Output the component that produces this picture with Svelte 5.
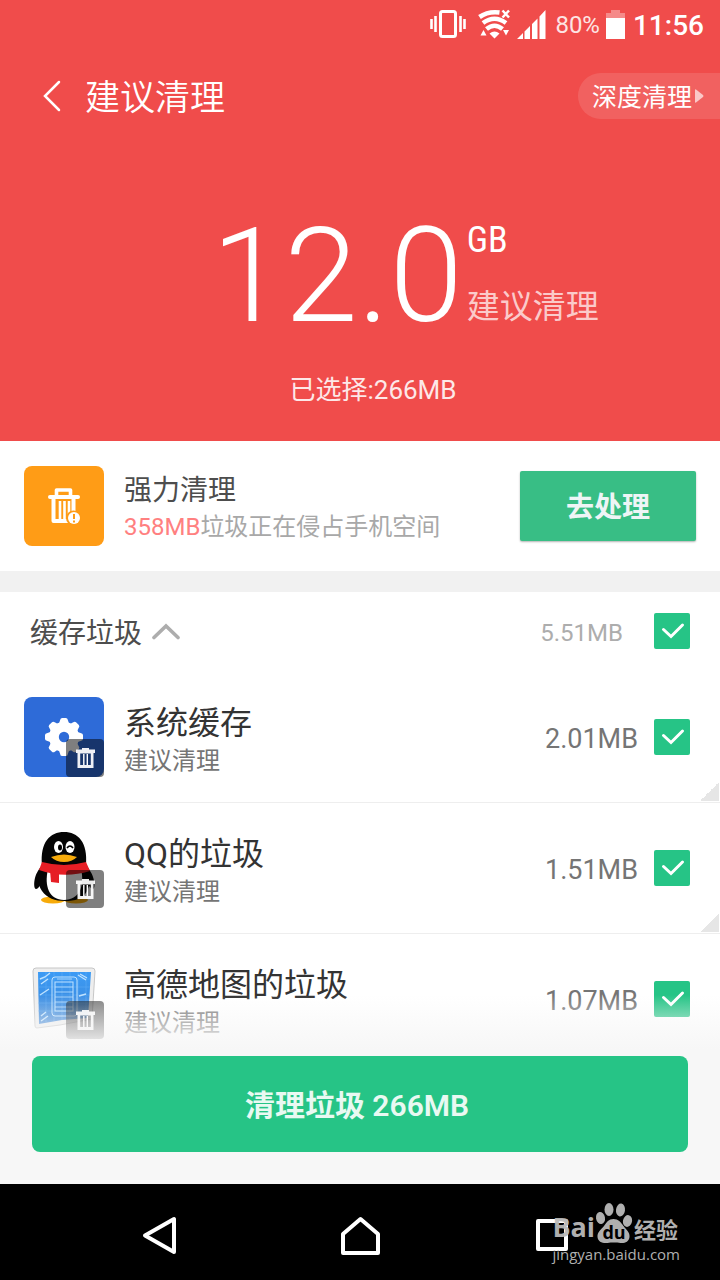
<script>
  let groupChecked = $state(true);
  let items = $state([
    { id: 'system', name: '系统缓存', size: '2.01MB', checked: true, corner: true },
    { id: 'qq', name: 'QQ的垃圾', size: '1.51MB', checked: true, corner: true },
    { id: 'map', name: '高德地图的垃圾', size: '1.07MB', checked: true, corner: false }
  ]);
</script>

{#snippet tick()}
  <svg class="tick" viewBox="0 0 36 36" aria-hidden="true"><path d="M9.500 16.500l7.500 7 11.500-11.500" /></svg>
{/snippet}

{#snippet badge()}
  <svg class="badge" viewBox="0 0 38 38" aria-hidden="true">
    <rect width="38" height="38" rx="4" fill="#000" fill-opacity=".5" />
    <path fill-rule="evenodd" d="M16 9h7v1.500h6V14h-1.500v15h-16V14H10v-3.500h6zM14.200 14.500V26h10.600V14.500z" fill="#fff" fill-opacity=".93" />
    <path d="M17.800 15v11M21.300 15v11" stroke="#fff" stroke-width="1.400" />
  </svg>
{/snippet}

<div class="page">
  <div class="hero">
    <div class="status">
      <svg width="36" height="28" viewBox="0 0 36 28" aria-hidden="true">
        <rect x="10.500" y="1.500" width="15" height="25" rx="2" fill="none" stroke="#fff" stroke-width="3" />
        <path d="M1.500 9v10M5.500 6v16M30.500 6v16M34.500 9v10" stroke="#fff" stroke-width="2.600" />
      </svg>
      <svg class="wifi" width="34" height="30" viewBox="0 0 34 30" aria-hidden="true">
        <g fill="none" stroke="#fff" stroke-width="4.600">
          <path d="M1.500 8Q10 2 21.500 3.500" />
          <path d="M5 14Q16.500 5.500 28 14" />
          <path d="M8.500 20Q16.500 13.500 24.500 20" />
        </g>
        <path d="M11.500 24.500q5-4 10 0l-5 5zM2.500 26.500l3-5.500 3 5.500zM25 21h6l-3 5.500z" fill="#fff" />
        <path d="M24.500 1.500l6.500 7M31 1.500l-6.500 7" stroke="#fff" stroke-width="2.500" />
      </svg>
      <svg width="29" height="29" viewBox="0 0 29 29" aria-hidden="true">
        <path d="M0 29l6-6v6zM7.500 21.500l5.500-5.500V29H7.500zM15 14l5.500-5.500V29H15zM22.500 6.500L28.500 0v29h-6z" fill="#fff" />
      </svg>
      <span class="percent">80%</span>
      <svg width="19" height="29" viewBox="0 0 19 29" aria-hidden="true">
        <path d="M5 0h9v3h5v5H0V3h5z" fill="#fff" fill-opacity=".35" />
        <path d="M0 8h19v21H0z" fill="#fff" />
      </svg>
      <time>11:56</time>
    </div>

    <header>
      <button class="back" aria-label="返回">
        <svg width="18" height="32" viewBox="0 0 18 32" aria-hidden="true"><path d="M16 2L2 16l14 14" fill="none" stroke="#fff" stroke-width="2.500" stroke-linecap="round" /></svg>
      </button>
      <h1>建议清理</h1>
      <button class="deep"><span>深度清理</span><svg width="9" height="14" viewBox="0 0 9 14" aria-hidden="true"><path d="M0 1q0-1 1-.5l7 5.500q1 1 0 2l-7 5.500q-1 .5-1-.5z" fill="#fff" fill-opacity=".65" /></svg></button>
    </header>

    <div class="total">
      <strong>12.0</strong>
      <div class="unit"><span class="gb">GB</span><span class="advice">建议清理</span></div>
    </div>
    <p class="selected">已选择:266MB</p>
  </div>

  <section class="power">
    <svg width="80" height="80" viewBox="0 0 80 80" aria-hidden="true">
      <rect width="80" height="80" rx="8" fill="#ff9c16" />
      <path d="M32.500 31v-7h14v7" fill="none" stroke="#fff" stroke-width="3.600" stroke-linejoin="round" />
      <path d="M26 31h28" stroke="#fff" stroke-width="4" stroke-linecap="round" />
      <path d="M29.500 32v23H46M49.500 32v13" fill="none" stroke="#fff" stroke-width="4" stroke-linejoin="round" />
      <path d="M36 35v19M40.500 35v19M45 35v14" stroke="#fff" stroke-width="2.600" />
      <circle cx="49.500" cy="52" r="7.500" fill="#ff9c16" />
      <circle cx="50" cy="52" r="6" fill="#fff" />
      <path d="M50 48v5M50 54.500v2" stroke="#ff9c16" stroke-width="2" />
    </svg>
    <div class="text">
      <h2>强力清理</h2>
      <p><em>358MB</em>垃圾正在侵占手机空间</p>
    </div>
    <button class="handle">去处理</button>
  </section>

  <section class="list">
    <div class="group">
      <button class="toggle" aria-expanded="true">
        <span>缓存垃圾</span>
        <svg width="28" height="17" viewBox="0 0 28 17" aria-hidden="true"><path d="M2 14.500L14 3l12 11.500" fill="none" stroke="#adadad" stroke-width="3.600" stroke-linecap="round" /></svg>
      </button>
      <span class="sum">5.51MB</span>
      <label class="check"><input type="checkbox" aria-label="缓存垃圾" bind:checked={groupChecked} />{@render tick()}</label>
    </div>

    <ul>
      {#each items as item (item.id)}
        <li>
          <div class="icon">
            {#if item.id === 'system'}
              <svg viewBox="0 0 80 80" aria-hidden="true">
                <rect width="80" height="80" rx="8" fill="#2e6bd8" />
                <g fill="#fff">
                  <circle cx="40" cy="40" r="15" />
                  {#each [0, 45, 90, 135, 180, 225, 270, 315] as angle}
                    <path d="M33 28q2.500-1 3-4.500.3-2.500 2-2.500h4q1.700 0 2 2.500.5 3.500 3 4.500z" transform={`rotate(${angle} 40 40)`} />
                  {/each}
                </g>
                <circle cx="40" cy="40" r="5.200" fill="#2e6bd8" />
              </svg>
            {:else if item.id === 'qq'}
              <svg viewBox="0 0 80 80" aria-hidden="true">
                <ellipse cx="29" cy="72" rx="12" ry="3.500" fill="#f7ab0a" />
                <ellipse cx="52" cy="72" rx="12" ry="3.500" fill="#f7ab0a" />
                <g transform="translate(0 -1)">
                  <path d="M19 38C9 46 9 62 12 62c3 0 5-6 7-9zM61 38c10 8 11 24 8 24-3 0-5-6-7-9z" fill="#050505" />
                  <path d="M18 38C16 15 26 5 40 5s24 10 22 33c4 10 5 19 1 26-4 8-12 10-22 10s-18-3-23-10c-5-7-4-16 0-26z" fill="#050505" />
                  <path d="M24 42h33c4 17-2 31-17 31S20 59 24 42z" fill="#fff" />
                  <path d="M18 35q22 6 44 0l4 9q-26 8-51-1z" fill="#e61e25" />
                  <path d="M26 43l9 2v11l-8-1z" fill="#e61e25" />
                  <ellipse cx="34.500" cy="20" rx="4.500" ry="6" fill="#fff" />
                  <ellipse cx="46" cy="20" rx="4.500" ry="6" fill="#fff" />
                  <ellipse cx="36" cy="20.500" rx="2" ry="3" />
                  <path d="M43 21q3-4 6 0" fill="none" stroke="#000" stroke-width="1.600" />
                  <path d="M27 30q13-5 26 0-5 5-13 5t-13-5z" fill="#f7ab0a" />
                </g>
              </svg>
            {:else}
              <svg viewBox="0 0 80 80" aria-hidden="true">
                <defs>
                  <linearGradient id="sheet" x2="0" y2="1"><stop stop-color="#3c9bf5" /><stop offset="1" stop-color="#3a83d4" /></linearGradient>
                </defs>
                <path d="M12 9h56q3 0 3 3l-3 48-32 6-23 3q-2 0-2-2L9 12q0-3 3-3z" fill="#eee" stroke="#c6c6c6" />
                <path d="M14 13h53l-3 46-26 2-23 4z" fill="url(#sheet)" />
                <path d="M14 20h52M14 28h52M14 36h51M14 44h51M14 52h50M22 13v50M30 13v49M38 13v48M46 13v47M54 13v46M62 13v45" stroke="#69b4fa" stroke-width=".7" opacity=".6" />
                <g fill="none" stroke="#bfe2ff">
                  <rect x="28" y="18" width="25" height="39" rx="3" />
                  <rect x="31" y="23" width="18" height="29" />
                  <path d="M33 20h15M31 28h18M31 33h18M31 38h18M31 43h18M31 48h18" stroke-width=".8" />
                  <path d="M16 20l5-2 5-4M17 25l7-5M16 36l9-6M17 62l7-5M17 57l5-4M54 16l8 5M56 15l7 4M55 37l7-2" stroke-width="1.400" />
                </g>
              </svg>
            {/if}
            {@render badge()}
          </div>
          <div class="text">
            <h3>{item.name}</h3>
            <p>建议清理</p>
          </div>
          <span class="size">{item.size}</span>
          <label class="check"><input type="checkbox" aria-label={item.name} bind:checked={item.checked} />{@render tick()}</label>
          {#if item.corner}<i class="corner"></i>{/if}
        </li>
      {/each}
    </ul>
  </section>

  <footer><button class="clean">清理垃圾 266MB</button></footer>

  <nav>
    <button aria-label="后退"><svg width="44" height="40" viewBox="0 0 44 40" aria-hidden="true"><path d="M4 19.500L33 3v33z" /></svg></button>
    <button aria-label="主页"><svg width="44" height="40" viewBox="0 0 44 40" aria-hidden="true"><path d="M5 18L22.500 3 40 18v19H5z" /></svg></button>
    <button aria-label="最近任务"><svg width="44" height="40" viewBox="0 0 44 40" aria-hidden="true"><path d="M3 5h28v28H3z" /></svg></button>
    <div class="mark">
      <div class="brand">
        <span class="bai">Bai</span>
        <span class="paw">
          <svg viewBox="0 0 38 42" aria-hidden="true">
            <g fill="#b9b9b9">
              <ellipse cx="5.500" cy="16" rx="4.500" ry="6" transform="rotate(-10 5.500 16)" />
              <ellipse cx="14" cy="7.500" rx="4.500" ry="6.500" />
              <ellipse cx="25.500" cy="8" rx="4.500" ry="6.500" transform="rotate(8 25.500 8)" />
              <ellipse cx="32.500" cy="19" rx="4.500" ry="6" transform="rotate(12 32.500 19)" />
              <path d="M18.500 17c5 0 7 3 10 7s6.500 6 6 11c-.5 5-5 6.500-9 6-4-.6-9-.6-13 0-5 .5-9.500-1-10-6-.3-5 3-7 6.500-11 3-4 4.500-7 9.500-7z" />
            </g>
          </svg>
          <b>du</b>
        </span>
        <span class="exp">经验</span>
      </div>
      <div class="site">jingyan.baidu.com</div>
    </div>
  </nav>
</div>

<style>
  :global(body) { margin: 0; background: #fff; }
  .page {
    min-height: 100vh;
    display: flex;
    flex-direction: column;
    background: #fff;
    color: #333;
    font-family: Roboto, "Noto Sans CJK SC", sans-serif;
  }
  h1, h2, h3, p, ul { margin: 0; padding: 0; font-weight: 400; }
  ul { list-style: none; }
  button { border: 0; padding: 0; background: none; color: inherit; font-family: inherit; cursor: pointer; }
  svg { display: block; flex: none; }

  .hero { background: #f04c4b; color: #fff; padding-bottom: 36px; }
  .status { display: flex; align-items: center; justify-content: flex-end; height: 48px; padding-right: 16px; }
  .wifi { margin: 0 5px 0 12px; }
  .percent { margin: 0 6px 0 9px; padding-top: 2px; font-size: 24px; color: #fde4e4; }
  time { margin-left: 8px; padding-top: 2px; font-size: 28px; font-weight: 500; }

  header { display: flex; align-items: center; height: 96px; padding-left: 43px; }
  h1 { margin-left: 24px; padding-top: 6px; font-size: 35px; line-height: 48px; font-weight: 350; }
  .deep {
    display: flex; align-items: center; gap: 3px;
    height: 46px; margin-left: auto; padding: 0 16px 0 14px;
    border-radius: 23px 0 0 23px; background: rgba(255, 255, 255, .12);
    font-size: 25px; line-height: 42px;
  }
  .deep span { padding-top: 4px; }
  .total { display: flex; justify-content: center; align-items: flex-start; gap: 4px; margin-top: 62px; padding-left: 90px; height: 140px; }
  .total strong { font-size: 132px; line-height: 140px; font-weight: 300; }
  .unit { display: flex; flex-direction: column; }
  .gb { font-family: "Roboto Condensed", "Liberation Sans Narrow", Roboto, sans-serif; font-size: 36px; line-height: 68px; }
  .advice { font-size: 33px; line-height: 66px; color: #fbcaca; }
  .selected { margin-top: 28px; padding-left: 26px; font-size: 26px; line-height: 32px; text-align: center; color: #fde8e8; }
  .hero { padding-bottom: 35px; }

  .power { display: flex; align-items: center; min-height: 130px; padding: 0 24px; border-bottom: 21px solid #f1f1f1; }
  .text { flex: 1; min-width: 0; margin-left: 20px; }
  .power .text { padding-top: 6px; }
  h2 { font-size: 28px; line-height: 36px; color: #4d4d4d; }
  .power p { font-size: 24px; line-height: 36px; color: #a8a8a8; }
  em { font-style: normal; color: #ff8080; }
  .handle { width: 176px; height: 70px; padding-bottom: 2px; border-radius: 2px; background: #38be85; box-shadow: 0 1px 2px rgba(0, 0, 0, .3); font-size: 28px; font-weight: 600; color: #eef5f6; }

  .group { display: flex; align-items: center; height: 78px; padding: 0 30px 2px; }
  .toggle { display: flex; align-items: center; gap: 10px; font-size: 28px; line-height: 40px; color: #4d4d4d; }
  .toggle span { padding-top: 5px; }
  .sum { margin: 0 31px 0 auto; padding-top: 3px; font-size: 24px; color: #adadad; }
  .check { display: grid; cursor: pointer; }
  .check input { grid-area: 1 / 1; appearance: none; width: 36px; height: 36px; margin: 0; border-radius: 2px; background: #d5d5d5; }
  .check input:checked { background: #26c486; }
  .tick { grid-area: 1 / 1; width: 36px; height: 36px; fill: none; stroke: #fff; stroke-width: 3; stroke-linecap: round; pointer-events: none; }

  li { position: relative; display: flex; align-items: center; height: 130px; padding: 0 30px 0 24px; border-bottom: 1px solid #eee; }
  .icon { position: relative; width: 80px; height: 80px; }
  .badge { position: absolute; right: 0; bottom: 0; width: 38px; height: 38px; }
  li .text { padding-top: 9px; }
  h3 { font-size: 32px; line-height: 38px; color: #333; }
  li p { font-size: 24px; line-height: 38px; color: #757575; }
  .size { margin-right: 16px; padding-top: 3px; font-size: 27px; color: #757575; }
  .corner { position: absolute; right: 1px; bottom: 1px; width: 19px; height: 19px; background: linear-gradient(135deg, transparent 50%, #e6e6e6 50%); }

  footer { position: relative; margin-top: -70px; padding: 61px 32px 32px; background: linear-gradient(rgba(247, 247, 247, 0), rgba(247, 247, 247, .3) 16px, #f7f7f7 54px); }
  .clean { display: block; width: 100%; height: 96px; padding: 0 6px 3px 0; border-radius: 8px; background: #26c486; font-size: 30px; font-weight: 600; color: #e9f9f2; }

  nav { position: relative; display: flex; align-items: center; flex: 1; min-height: 89px; padding: 7px 64px 0; background: #000; }
  nav button { flex: 1; display: flex; justify-content: center; }
  nav button svg { fill: none; stroke: #fff; stroke-width: 4; stroke-linejoin: round; }
  .mark { position: absolute; right: 40px; bottom: 16px; color: #b9b9b9; opacity: .95; }
  .brand { display: flex; align-items: flex-end; }
  .bai { font: 700 27px/34px "Open Sans", sans-serif; }
  .paw { position: relative; width: 38px; height: 42px; }
  .paw b { position: absolute; left: 0; right: 0; bottom: 1px; text-align: center; font: 700 18px/22px "Open Sans", sans-serif; color: #000; }
  .exp { margin-left: 1px; font-size: 22px; line-height: 26px; font-weight: 700; }
  .site { font: 15px/20px "Open Sans", sans-serif; }
</style>
